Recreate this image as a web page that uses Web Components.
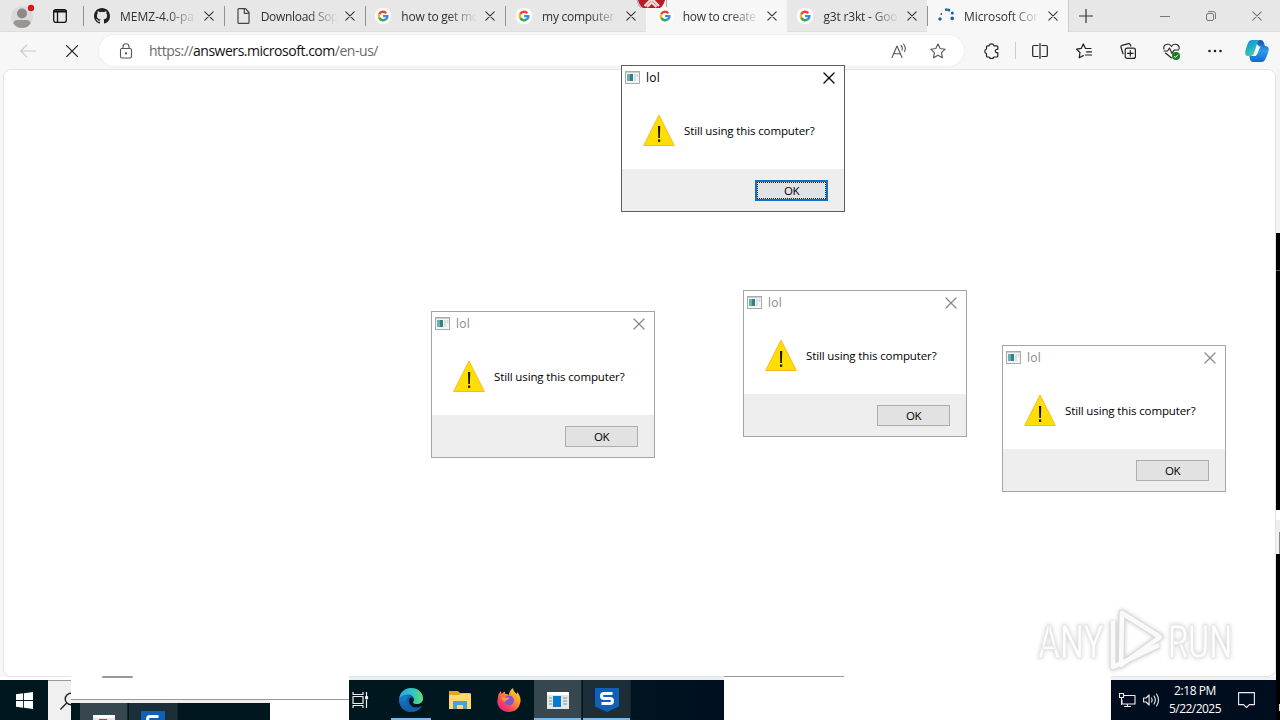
<!DOCTYPE html>
<html lang="en"><head><meta charset="utf-8"><title>Desktop</title>
<style>
html,body{margin:0;background:#fff;overflow:hidden}
body{width:1280px;height:720px;font-family:"Open Sans","Noto Sans",sans-serif;font-size:12px;color:#222}
</style></head><body>
<win-desktop></win-desktop>
<script>
const google='<svg viewBox="0 0 16 16"><rect width="16" height="16" rx="7" fill="#fff"/><path d="M12.2 4.4A5.5 5.5 0 0 0 3.2 5.4l2 1.5A3.2 3.2 0 0 1 10.5 6z" fill="#ea4335"/><path d="M3.2 5.4a5.6 5.6 0 0 0 0 5.2l2-1.6a3 3 0 0 1 0-2.1z" fill="#fbbc05"/><path d="M3.2 10.6a5.5 5.5 0 0 0 8.5 1.5l-2-1.6A3.2 3.2 0 0 1 5.2 9z" fill="#34a853"/><path d="M13.5 6.9H8.1v2.3h3.1a2.8 2.8 0 0 1-1.5 1.4l2 1.6c1.5-1.3 2.1-3.2 1.8-5.3z" fill="#4285f4"/></svg>';
const s=(vb,body,c='currentColor',w=1)=>`<svg viewBox="0 0 ${vb}" fill="none" stroke="${c}" stroke-width="${w}" stroke-linecap="round" stroke-linejoin="round">${body}</svg>`;
const ICONS={
google,
github:'<svg viewBox="0 0 16 16"><path fill="#202327" d="M8 0C3.58 0 0 3.58 0 8c0 3.54 2.29 6.53 5.47 7.59.4.07.55-.17.55-.38 0-.19-.01-.82-.01-1.49-2.01.37-2.53-.49-2.69-.94-.09-.23-.48-.94-.82-1.13-.28-.15-.68-.52-.01-.53.63-.01 1.08.58 1.23.82.72 1.21 1.87.87 2.33.66.07-.52.28-.87.51-1.07-1.78-.2-3.64-.89-3.64-3.95 0-.87.31-1.59.82-2.15-.08-.2-.36-1.02.08-2.12 0 0 .67-.21 2.2.82a7.6 7.6 0 0 1 4 0c1.53-1.04 2.2-.82 2.2-.82.44 1.1.16 1.92.08 2.12.51.56.82 1.27.82 2.15 0 3.07-1.87 3.75-3.65 3.95.29.25.54.73.54 1.48 0 1.07-.01 1.93-.01 2.2 0 .21.15.46.55.38A8.01 8.01 0 0 0 16 8c0-4.42-3.58-8-8-8z"/></svg>',
doc:s('16 16','<path d="M4.500.6h6L14 4.500v9.900a1 1 0 0 1-1 1H4a1 1 0 0 1-1-1V1.600a1 1 0 0 1 1-1zM9.300.8v4.500H14"/>','#444',1.2),
spinner:'<svg viewBox="0 0 16 16" fill="#185fa5"><circle cx="2" cy="11" r="1.700"/><circle cx="3.300" cy="6" r=".9"/><circle cx="8.300" cy="1.700" r="1.400"/><circle cx="10.800" cy="2" r="1.500"/><circle cx="14.300" cy="5" r="1.500"/><circle cx="14.200" cy="10.400" r="1.800"/></svg>',
close:s('10 10','<path d="M.8.8l8.400 8.400M9.200.8L.8 9.200"/>','currentColor',1.05),
plus:s('14 14','<path d="M7 .5v13M.5 7h13"/>','#333',1.2),
min:s('10 10','<path d="M0 5.500h10"/>','#777'),
restore:s('10 10','<rect x=".5" y="2.500" width="7" height="7" rx="1.500"/><path d="M2.500.6h5a2 2 0 0 1 2 2v5"/>','#777'),
back:s('16 14','<path d="M15.500 7H.8M7 .8L.8 7 7 13.200"/>','#c9c9c9',1.2),
stop:s('12 12','<path d="M.6.6l11 11M11.600.6l-11 11"/>','#222',1.2),
lock:s('14 16','<rect x="1.500" y="5.500" width="11" height="9.500" rx="1.500"/><path d="M4 5.500V3.800a3 3 0 0 1 6 0v1.700"/><circle cx="7" cy="10.300" r=".6" fill="#555"/>','#555',1.1),
read:s('16 16','<path d="M1 14.500L6 3l5 11.500M2.600 10.800h6.800M10 2.500q2 2 1 4.500M12.500 1q3 3.500 1 7.500"/>','#555',1.1),
star:s('16 16','<path d="M8 .9l2.200 4.600 5 .7-3.700 3.500.9 5.100L8 12.300l-4.500 2.500.9-5.100L.8 6.200l5-.7z"/>','#555',1.1),
puzzle:s('16 16','<path d="M5 2.800C5.500.2 9.500.2 10 2.800h2.800a1 1 0 0 1 1 1V6.300c-3.300-.6-3.300 3.800 0 3.400V13a1 1 0 0 1-1 1H10c-.5 2-4.500 2-5 0H3.500a1 1 0 0 1-1-1v-2.500C.2 10 .2 6.500 2.500 6V3.800a1 1 0 0 1 1-1z"/>','#222',1.2),
split:s('16 16','<path d="M6 2.500H2a1.300 1.300 0 0 0-1.300 1.300v8.400A1.300 1.300 0 0 0 2 13.500h4M10 2.500h4a1.300 1.300 0 0 1 1.300 1.300v8.400a1.300 1.300 0 0 1-1.300 1.300h-4M8 .5v15"/>','#222',1.2),
favs:s('16 16','<path d="M15 5.500H9.500L7.300.9 5.200 5.400.6 6.200 4 9.500l-.8 5.300 4-2.200M10.500 8.800h5M9.500 12h6"/>','#222',1.2),
collect:s('16 16','<rect x="5.200" y="5.200" width="10.200" height="10.200" rx="2"/><path d="M10.300 7.500v5.600M7.500 10.300h5.600M3 10.800L1 4.300Q.6 2.800 2 2.300L8.500.7Q10 .5 10.500 2l.3 1"/>','#222',1.2),
health:s('17 16','<path d="M1 6C0 2.500 3.200.8 5.500 1.300 7.200 1.500 8.500 3.500 8.500 3.500S9.800 1.500 11.500 1.300C14 .8 17 2.700 16 6M1 8h3.500l2-3 2.500 5.500L11 7h4.500M2.500 10l6 5"/>','#222',1.1),
dots:'<svg viewBox="0 0 14 4" fill="#222"><circle cx="1.500" cy="2" r="1.300"/><circle cx="7" cy="2" r="1.300"/><circle cx="12.500" cy="2" r="1.300"/></svg>',
copilot:'<svg viewBox="0 0 24 22"><defs><linearGradient id="a" x2=".6" y2="1"><stop stop-color="#1787dc"/><stop offset=".5" stop-color="#22aecb"/><stop offset="1" stop-color="#52d391"/></linearGradient><linearGradient id="b" x2="0" y2="1"><stop stop-color="#184fa8"/><stop offset=".5" stop-color="#2b9bed"/><stop offset="1" stop-color="#1167d5"/></linearGradient></defs><path d="M7 0h9q2 .3 2.800 2.500L20 6q3.500 0 3.800 3-.1 3-3.600 10.500Q19 22 16.500 22H8q-2.500 0-3-3l-.7-3H9l5-10z" fill="url(#b)"/><path d="M7 0h8q-2 .5-3 4L9 13q-1 3-3.500 3H3Q0 16 .2 12.500.5 9 3.500 2 4.500 0 7 0z" fill="url(#a)"/><path d="M14 6.500h2q-1.500 1-2.500 4.500-1 4-3 5H8.500q1.500-1 2.500-5 1-4 3-4.500z" fill="#fff"/></svg>',
panes:s('14 14','<rect x=".7" y=".7" width="12.600" height="12.600" rx="2"/><path d="M1 2.800h12M1 1.800h12M4.500 3v10"/>','#111',1.3),
user:'<svg viewBox="0 0 24 24"><circle cx="11" cy="13" r="11" fill="#dadada"/><circle cx="11" cy="9.500" r="5" fill="#8e8a87"/><path d="M2.500 19.500q0-3.500 4-3.500h9q4 0 4 3.500-3 4.500-8.500 4.500t-8.500-4.500z" fill="#999592"/><circle cx="20" cy="4" r="3.200" fill="#d41920"/></svg>',
app:'<svg viewBox="0 0 16 14"><rect x=".5" y=".5" width="14" height="12" fill="#f4f6f6" stroke="#a6acac"/><path d="M1 1.500h13" stroke="#c9d0d0"/><rect x="2" y="3" width="6" height="7" fill="#377f83"/><rect x="2" y="3" width="3" height="7" fill="#6aaeb0"/><path d="M10 3v7M12.500 3v3" stroke="#c9dbd8" stroke-width="1.500"/></svg>',
warn:'<svg viewBox="0 0 32 32"><path d="M16 1L31.300 31.500H.7z" fill="#ffde00" stroke="#f5b92c" stroke-linejoin="round"/><path d="M15 12h2.200l-.3 12h-1.600z" fill="#111"/><rect x="15" y="25.500" width="2.200" height="2.300" fill="#111"/></svg>',
win:'<svg viewBox="0 0 16 16" fill="#fff"><path d="M0 2.200l6.700-1v6.400H0zM7.500 1.100L16 0v7.600H7.500zM0 8.400h6.700v6.400l-6.700-1zM7.500 8.400H16V16l-8.500-1.100z"/></svg>',
search:s('18 18','<circle cx="11" cy="7" r="5.800"/><path d="M6.500 11.200L.8 17"/>','#222',1.4),
task:s('17 16','<path d="M1 0v2.500h10V0M1 16v-2.500h10V16M1 4.500h10v7H1zM14.500 0v3.500M14.500 8v7.500"/><rect x="13.700" y="4.700" width="1.800" height="2" fill="#fff"/>','#eee',1.2),
edge:'<svg viewBox="0 0 24 24"><defs><linearGradient id="a" x2="1"><stop stop-color="#27a9dd"/><stop offset=".6" stop-color="#36c6bd"/><stop offset="1" stop-color="#65de68"/></linearGradient><linearGradient id="b" y2="1" x2="0"><stop stop-color="#1681cd"/><stop offset="1" stop-color="#1556a3"/></linearGradient></defs><path d="M.2 12C.2 5 5 0 12 0s12 5 12 10.500c0 4-3.500 5.500-6 5.500-3 0-4.500-1-3.500-2.500C16 11 13 8.500 11 10c-2 2-1 7 3 9 3 1.200 6 .3 8-.8q.9-.2.4.8C20 22.500 16.500 24 12 24 5 24 .2 19 .2 12z" fill="#1560ae"/><path d="M.2 11C1 3.500 7 0 12 0c7 0 12 5 12 10.500 0 4-3.500 5.500-6 5.500-3 0-4.500-1-3.500-2.500C17 10 13 6.500 9 6.500 4 6.500.5 10 .2 11z" fill="url(#a)"/><path d="M.1 11.500C2 7 7 6.500 10.500 8 7 10 6 14 8 18q2 4 6 5.800C6 25 0 18.500.1 11.500z" fill="url(#b)"/></svg>',
folder:'<svg viewBox="0 0 22 19"><path d="M0 0h9l2 2h10v4H0z" fill="#e5a52d"/><path d="M0 4h10l2-1.500h10V18H0z" fill="#ffd96b"/><path d="M4 18v-8h14v8h-4v-4H8v4z" fill="#4ba0d8"/></svg>',
firefox:'<svg viewBox="0 0 24 24"><defs><linearGradient id="a" x1="1" x2=".2" y2="1"><stop stop-color="#ffe838"/><stop offset=".4" stop-color="#ff9d28"/><stop offset=".8" stop-color="#f53862"/><stop offset="1" stop-color="#cb2a91"/></linearGradient></defs><path d="M1 9Q1.500 5 4 3l.6 3L7.500 3.500 8.500 6q2 0 3.500 1 0-4 4-7 .5 4 4 6l.3-2C22.500 7 24 10 23.500 13.500 22.500 20 18 24 12 24 5 24 0 19 .3 13z" fill="url(#a)"/><circle cx="12" cy="12.500" r="5" fill="#8154d2"/><path d="M4.500 9q3 1 7 .5 2 1-1.500 2.500-2 0-2 2-3-1-3.500-5z" fill="#ff9b2c"/></svg>',
winapp:'<svg viewBox="0 0 22 17"><rect width="22" height="17" fill="#e3e7e8"/><path d="M0 1.500h22" stroke="#fff" stroke-width="3"/><rect x="6" y="4" width="8" height="11" fill="#0879d1"/><path d="M2 6h3M2 9h3M2 12h3M16 6h4M16 9h4M16 12h4" stroke="#8b8f91"/></svg>',
shield:'<svg viewBox="0 0 24 24"><path d="M0 0h24v18.500L12 24 0 18.500z" fill="#1160b8"/><path d="M17.500 5.500H9Q6.500 5.500 6.500 8t2.500 2.500h6q2.500 0 2.500 2.500T15 15.500H6.500" fill="none" stroke="#fff" stroke-width="3"/></svg>',
net:s('17 14','<path d="M5 2.500h11v8.500H3V7M8.500 11v2.500M5.500 13.500h6M.5.5h4v4h-4zM2.500 4.500v7"/>','#eee',1.1),
sound:s('17 14','<path d="M.6 5h2.500l3-3v10l-3-3H.6zM8.500 5q1.300 2 0 4M11 3q2.700 4 0 8M13.500 1q4 6 0 12"/>','#eee',1.1),
notify:s('17 16','<path d="M.6.6h15.800v12h-5L8.500 15.500 5.600 12.600h-5z"/>','#eee',1.1),
check:'<svg viewBox="0 0 8 8"><circle cx="4" cy="4" r="4" fill="#197c22"/><path d="M2 4.200l1.400 1.300L6 2.700" stroke="#fff" fill="none"/></svg>',
error:'<svg viewBox="0 0 32 8"><path d="M2 0h27q-1 5-5 8H7Q3 5 2 0z" fill="#b81c24"/><path d="M8.500 6L14.500 0h2.500l6 6M11 7l4.700-4.500L20.500 7" fill="none" stroke="#f0dcdc" stroke-width="2.300"/><path d="M1 0q1 5 4 8M30.500 0v7" stroke="#888" fill="none" stroke-width=".7"/></svg>'
};
class Base extends HTMLElement{
  constructor(){super();this.attachShadow({mode:'open'})}
  connectedCallback(){this.shadowRoot.innerHTML=this.view();this.ready&&this.ready()}
  a(n,d=''){return this.getAttribute(n)||d}
}
customElements.define('ui-icon',class extends Base{view(){return `<style>:host{display:block;flex:none;width:${this.a('w','16')}px;height:${this.a('h',this.a('w','16'))}px}svg{display:block;width:100%;height:100%}</style>${ICONS[this.a('name')]}`}});
/* A single-line label; "w" sets the run's width through letter spacing. */
customElements.define('ui-label',class extends Base{
  view(){return `<style>:host{display:block;white-space:pre;flex:none}span{display:inline-block}</style><span><slot></slot></span>`}
  ready(){const w=+this.a('w');if(w){const e=this.shadowRoot.querySelector('span');const n=this.textContent.length;e.style.letterSpacing=((w-e.getBoundingClientRect().width)/n)+'px'}}
});
customElements.define('browser-tab',class extends Base{view(){return `<style>
:host{display:flex;align-items:center;flex:none;width:140.700px;height:32px;box-sizing:border-box;padding-left:10.700px;color:#303030;position:relative}
:host([sep])::before{content:"";position:absolute;left:0;top:6px;height:20px;width:1px;background:#929292}
:host([active]){background:#f7f7f7}
.t{width:78px;overflow:hidden;margin-left:10px;margin-right:6px;-webkit-mask-image:linear-gradient(90deg,#000 60%,transparent 98%)}
</style><ui-icon name="${this.a('icon')}" w="16"></ui-icon><div class="t"><ui-label w="${this.a('tw')}">${this.a('label')}</ui-label></div><ui-icon name="close" w="10"></ui-icon>`}});
customElements.define('tab-strip',class extends Base{view(){return `<style>
:host{display:flex;height:32px;background:#e7e7e7;box-shadow:inset 0 -1px #dedede;align-items:center;color:#333}
.lead{display:flex;width:83.300px;align-items:center;gap:18px;padding-left:11px;box-sizing:border-box}
.end{display:flex;flex:1;align-items:center;height:32px;border-left:1px solid #ccc;box-sizing:border-box;padding-left:10px}
.win{display:flex;gap:36px;margin-left:auto;padding-right:18px;color:#777}
</style><div class="lead"><ui-icon name="user" w="24"></ui-icon><ui-icon name="panes" w="14"></ui-icon></div>
<browser-tab sep icon="github" label="MEMZ-4.0-pa" tw="74"></browser-tab><browser-tab sep icon="doc" label="Download Sop" tw="77.500"></browser-tab><browser-tab sep icon="google" label="how to get mo" tw="77.500"></browser-tab><browser-tab sep icon="google" label="my computer" tw="72"></browser-tab><browser-tab active icon="google" label="how to create" tw="73"></browser-tab><browser-tab icon="google" label="g3t r3kt - Goo" tw="74"></browser-tab><browser-tab active sep icon="spinner" label="Microsoft Cor" tw="74"></browser-tab>
<div class="end"><ui-icon name="plus" w="14"></ui-icon><div class="win"><ui-icon name="min" w="10"></ui-icon><ui-icon name="restore" w="10"></ui-icon><ui-icon name="close" w="10"></ui-icon></div></div>`}});
customElements.define('tool-bar',class extends Base{view(){return `<style>
:host{display:flex;height:37px;background:#f7f7f7;align-items:center;box-sizing:border-box;padding-left:20px}
.addr{display:flex;align-items:center;background:#fff;border-radius:16px;height:31px;width:865px;box-sizing:border-box;margin-left:21px;padding-left:20px;box-shadow:0 0 2px #ddd;font-size:14px;color:#6a6a6a}
.addr ui-label{margin-left:16px}.k{color:#111}
.r{margin-left:auto;display:flex;gap:23px;padding-right:18px}
.tools{display:flex;flex:1;align-items:center;padding-left:20px}
.tools>ui-icon,.h{margin-right:28px}.h{position:relative}.h ui-icon+ui-icon{position:absolute;right:0;bottom:-1px}
.v{width:1px;height:17px;background:#ccc;margin:0 16px 0 -13px}
</style><ui-icon name="back" w="16" h="14"></ui-icon><ui-icon name="stop" w="12" style="margin-left:30px"></ui-icon>
<div class="addr"><ui-icon name="lock" w="14" h="16"></ui-icon><ui-label w="229">https://<span class="k">answers.microsoft.com</span>/en-us/</ui-label><div class="r"><ui-icon name="read" w="16"></ui-icon><ui-icon name="star" w="16"></ui-icon></div></div>
<div class="tools"><ui-icon name="puzzle" w="16"></ui-icon><div class="v"></div><ui-icon name="split" w="16"></ui-icon><ui-icon name="favs" w="16"></ui-icon><ui-icon name="collect" w="16" style="margin-right:27px"></ui-icon><div class="h"><ui-icon name="health" w="17" h="16"></ui-icon><ui-icon name="check" w="8"></ui-icon></div><ui-icon name="dots" w="14" h="4" style="margin-right:23px"></ui-icon><ui-icon name="copilot" w="24" h="22" style="margin:0"></ui-icon></div>`}});
customElements.define('message-box',class extends Base{view(){return `<style>
:host{display:flex;flex-direction:column;position:absolute;left:${this.a('x')}px;top:${this.a('y')}px;width:224px;height:147px;box-sizing:border-box;border:1px solid #a5a5a5;background:#fff;color:#000}
:host([focused]){border-color:#5c5c5c}
header{display:flex;align-items:center;height:24px;padding:0 9px 0 3px;color:#8a8a8a}
:host([focused]) header{color:#000}
header ui-label{margin:-1px auto 0 5px}
main{display:flex;height:79px;align-items:center;padding:1px 0 0 21px;box-sizing:border-box;gap:9px;font-size:11.500px}
footer{display:flex;flex:1;background:#eee;justify-content:flex-end;align-items:center;padding-right:16px;font-size:11.500px}
.b{width:73px;height:21px;box-sizing:border-box;border:1px solid #adadad;background:#e2e2e2;display:flex;align-items:center;justify-content:center}
:host([focused]) .b{border:2px solid #0873c8;outline:1px dotted #222;outline-offset:-3px}
</style><header><ui-icon name="app" w="16" h="14"></ui-icon><ui-label w="14">lol</ui-label><ui-icon name="close" w="12"></ui-icon></header><main><ui-icon name="warn" w="32"></ui-icon><ui-label w="130.500">Still using this computer?</ui-label></main><footer><div class="b"><ui-label w="15">OK</ui-label></div></footer>`}});
customElements.define('task-button',class extends Base{view(){return `<style>:host{display:flex;width:49px;height:40px;align-items:center;justify-content:center;flex:none;box-sizing:border-box}:host([run]){box-shadow:inset 0 -2px #76b9ed}:host([on]){background:#36474f}:host([dim]){background:#1c2e38}
:host([on]),:host([dim]){border-right:1px solid #14252c}</style><ui-icon name="${this.a('icon')}" w="${this.a('w')}" h="${this.a('h')}"></ui-icon>`}});
customElements.define('task-bar',class extends Base{view(){return `<style>
:host{display:flex;height:43px;color:#fff}
.d{background:#001720;height:40px;margin-top:3px;display:flex;align-items:center}
.start{width:48px;justify-content:center}
.find{width:23px;height:40px;margin-top:3px;background:#f0f0f0;display:flex;align-items:center;padding-left:12px;box-sizing:border-box;overflow:hidden;border-top:1px solid #999}
.ghost{width:278px;height:44px;margin-top:-1px;background:#fff;display:flex;flex-direction:column}
.ghost i{display:block;width:31px;height:2px;background:#999;border-radius:2px;margin:0 0 0 31px}
.edge{height:3px;border-top:1px solid #999;margin-top:21px;background:linear-gradient(90deg,#eee 199px,#fff 0)}
.copy{width:199px;height:17px;background:#001720;display:flex;overflow:hidden;padding-left:9px;box-sizing:border-box}
.main{width:375px;background:linear-gradient(90deg,#001720 60%,#000f20);box-shadow:0 -3px #e9f0f2}
.gap{width:387px;height:44px;margin-top:-1px;background:#fff;box-sizing:border-box}.gap b{display:block;width:120px;height:1px;background:#999}
.tray{width:165px;background:#000d1e;padding-left:8px;box-sizing:border-box;box-shadow:0 -3px #f1f2f4}
.clock{width:54px;margin-left:8px;display:flex;flex-direction:column;align-items:center;line-height:18px}
</style><div class="d start"><ui-icon name="win" w="17"></ui-icon></div><div class="find"><ui-icon name="search" w="18"></ui-icon></div>
<div class="ghost"><i></i><div class="edge"></div><div class="copy"><task-button on icon="winapp" w="22" h="17" style="width:48px"></task-button><div style="width:1px"></div><task-button dim icon="shield" w="24" h="24"></task-button></div></div>
<div class="d main"><ui-icon name="task" w="17" h="16" style="margin:0 19px 0 3px"></ui-icon><task-button run icon="edge" w="24" h="24" style="width:40px;margin:0 4px 0 3px"></task-button><task-button icon="folder" w="22" h="19"></task-button><task-button icon="firefox" w="24" h="24"></task-button><div style="width:1px"></div><task-button run on icon="winapp" w="22" h="17" style="width:48px"></task-button><task-button run dim icon="shield" w="24" h="24" style="margin-left:1px;width:48px"></task-button></div>
<div class="gap"><b></b></div>
<div class="d tray"><ui-icon name="net" w="17" h="14"></ui-icon><ui-icon name="sound" w="17" h="14" style="margin-left:7px"></ui-icon><div class="clock"><ui-label w="42">2:18 PM</ui-label><ui-label w="52">5/22/2025</ui-label></div><ui-icon name="notify" w="17" h="16" style="margin-left:16px"></ui-icon></div>`}});
customElements.define('water-mark',class extends Base{view(){return `<style>:host{position:absolute;left:1030px;top:604px;width:240px;height:74px}svg{display:block;overflow:visible;filter:drop-shadow(0 0 2px #ccc)}text{font:400 46px "Roboto",sans-serif}</style>
<svg width="240" height="74" fill="#fff" stroke="#e6e6e6" stroke-width=".8"><text transform="translate(8 54) scale(.73 1)" x="0" y="0">ANY</text><text transform="translate(138 54) scale(.71 1)" x="0" y="0">RUN</text><path fill="none" stroke="#ddd" stroke-width="7" stroke-linejoin="round" d="M92 9L130 33 91 61zM83 17V63L129 41"/><path fill="none" stroke="#fafafa" stroke-width="4.500" stroke-linejoin="round" d="M92 9L130 33 91 61zM83 17V63L129 41"/></svg>`}});
customElements.define('win-desktop',class extends Base{view(){return `<style>
:host{display:flex;flex-direction:column;width:1280px;height:720px;position:relative;overflow:hidden;background:#fff}
.page{flex:1;background:#f7f7f7;display:flex;padding:0 0 0 3px}
.view{width:1271px;border:1px solid #e3e3e3;border-radius:8px;background:#fff}
.side{position:absolute;right:0;top:69px;width:4px;height:651px;display:flex;flex-direction:column;background:#000}
.side i{display:block}
.err{position:absolute;left:636px;top:0}
</style><tab-strip></tab-strip><tool-bar></tool-bar><div class="page"><div class="view"></div></div><task-bar></task-bar>
<div class="side"><i style="height:164px;background:#f3f3f3"></i><i style="height:37px"></i><i style="height:1px;background:#555"></i><i style="height:239px"></i><i style="height:10px;background:#fff"></i><i style="height:12px;background:#eee"></i><i style="height:22px;background:#e6e6e6;border-left:3px solid #f2f2f2;background:#888"></i><i style="height:150px"></i><i style="height:7px;width:1px;margin-left:3px;background:#ddd"></i></div>
<ui-icon class="err" name="error" w="32" h="8"></ui-icon>
<message-box x="431" y="311"></message-box><message-box x="743" y="290"></message-box><message-box x="1002" y="345"></message-box><message-box focused x="621" y="65"></message-box>
<water-mark></water-mark>`}});
</script></body></html>
